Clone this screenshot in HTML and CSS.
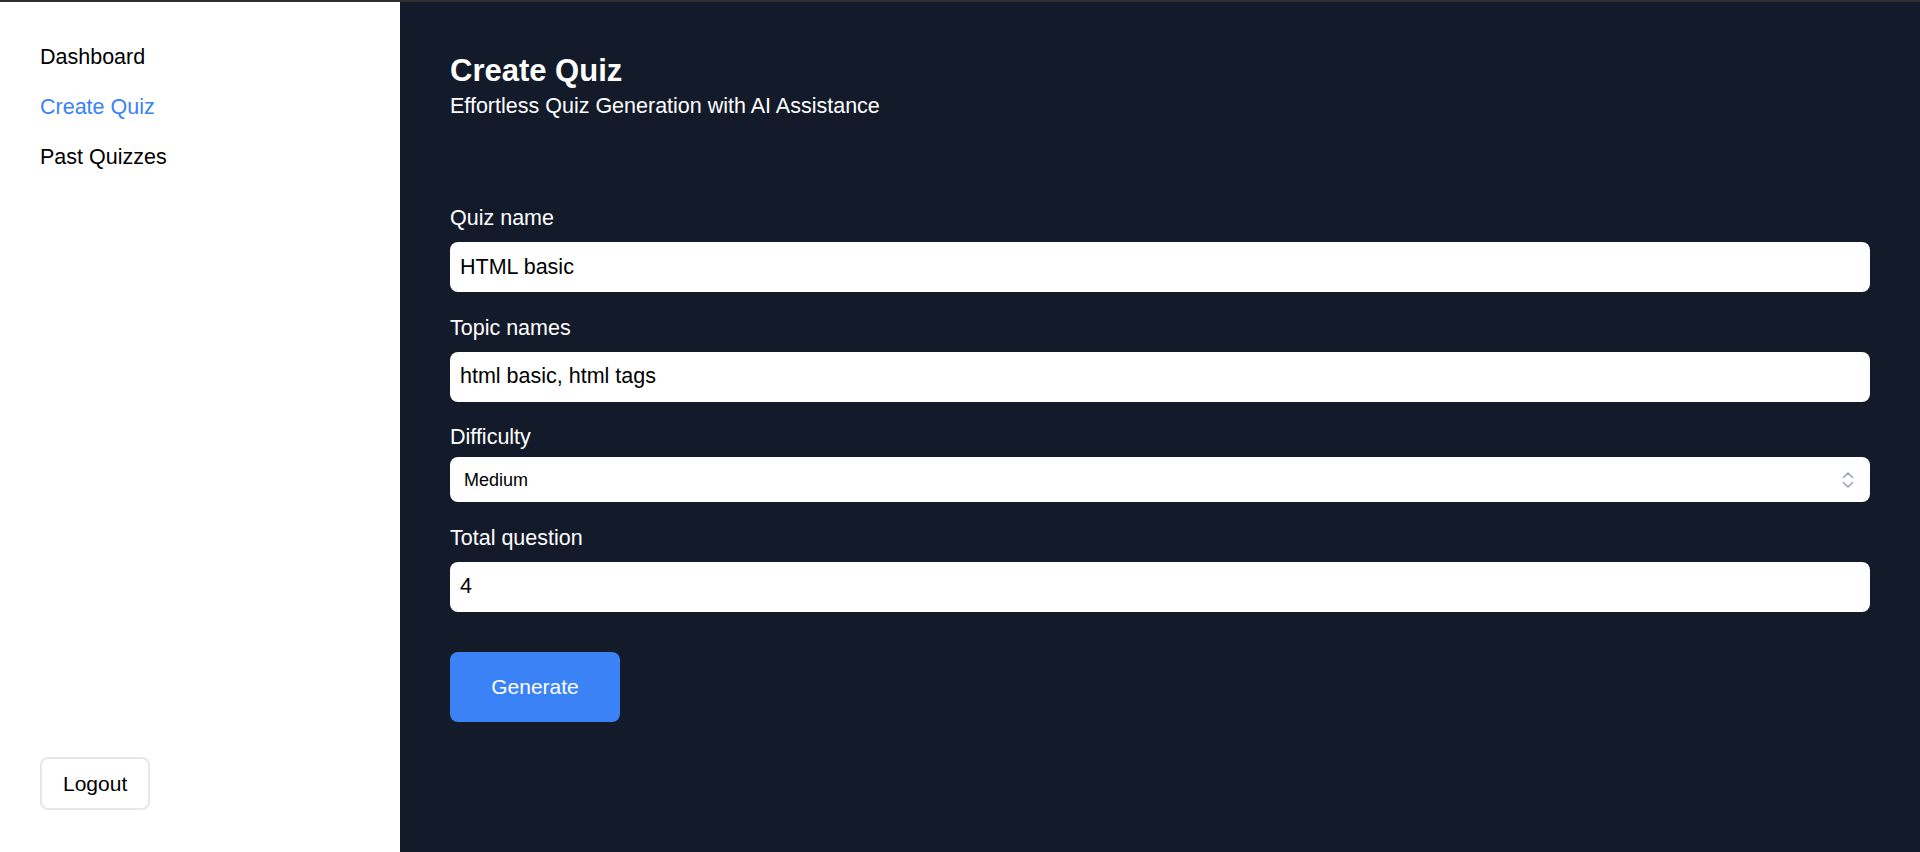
FILE: index.html
```html
<!DOCTYPE html>
<html lang="en">
<head>
<meta charset="utf-8">
<title>Create Quiz</title>
<link rel="stylesheet" href="styles.css">
</head>
<body>
<div class="topbar"></div>
<div class="app">
  <aside class="sidebar">
    <nav class="nav">
      <a class="nav-link" href="#">Dashboard</a>
      <a class="nav-link active" href="#">Create Quiz</a>
      <a class="nav-link" href="#">Past Quizzes</a>
    </nav>
    <button class="logout" type="button">Logout</button>
  </aside>
  <main class="main">
    <h1 class="title">Create Quiz</h1>
    <p class="subtitle">Effortless Quiz Generation with AI Assistance</p>
    <form class="form">
      <div class="field">
        <label class="label" for="qname">Quiz name</label>
        <input class="input" id="qname" type="text" value="HTML basic">
      </div>
      <div class="field">
        <label class="label" for="topics">Topic names</label>
        <input class="input" id="topics" type="text" value="html basic, html tags">
      </div>
      <div class="field">
        <label class="label label-tight" for="diff">Difficulty</label>
        <div class="select-wrap">
          <select class="select" id="diff">
            <option>Easy</option>
            <option selected>Medium</option>
            <option>Hard</option>
          </select>
          <svg class="select-icon" width="12" height="18" viewBox="0 0 12 18" aria-hidden="true">
            <path d="M1.5 6.5 L6 2 L10.5 6.5" fill="none" stroke="#9ca3af" stroke-width="1.6" stroke-linecap="round" stroke-linejoin="round"/>
            <path d="M1.5 11.5 L6 16 L10.5 11.5" fill="none" stroke="#9ca3af" stroke-width="1.6" stroke-linecap="round" stroke-linejoin="round"/>
          </svg>
        </div>
      </div>
      <div class="field">
        <label class="label" for="total">Total question</label>
        <input class="input" id="total" type="number" value="4">
      </div>
      <button class="generate" type="button">Generate</button>
    </form>
  </main>
</div>
</body>
</html>
```

FILE: styles.css
```css
* {
  box-sizing: border-box;
}

html, body {
  margin: 0;
  padding: 0;
}

body {
  font-family: "Liberation Sans", Arial, sans-serif;
  background: #131a2a;
  overflow: hidden;
}

.topbar {
  height: 2px;
  background: #303030;
}

.app {
  display: flex;
  height: 850px;
}

.sidebar {
  width: 400px;
  flex: 0 0 400px;
  background: #ffffff;
  display: flex;
  flex-direction: column;
  padding: 30px 0 42px 40px;
}

.nav {
  display: flex;
  flex-direction: column;
}

.nav-link {
  font-size: 21.5px;
  line-height: 24px;
  padding: 13px 0;
  color: #000000;
  text-decoration: none;
  align-self: flex-start;
}

.nav-link.active {
  color: #3b82f6;
}

.logout {
  margin-top: auto;
  align-self: flex-start;
  font-family: inherit;
  font-size: 21px;
  line-height: 24px;
  padding: 12.5px 21px;
  border: 2px solid #e5e7eb;
  border-radius: 8px;
  background: #ffffff;
  color: #000000;
}

.main {
  flex: 1;
  background: #131a2a;
  color: #ffffff;
  padding: 51px 50px 0;
}

.title {
  margin: 0;
  font-size: 31px;
  line-height: 36px;
  font-weight: 700;
}

.subtitle {
  margin: 5px 0 0;
  font-size: 21.5px;
  line-height: 24px;
}

.form {
  margin-top: 88px;
  display: flex;
  flex-direction: column;
}

.field {
  display: flex;
  flex-direction: column;
}

.field + .field {
  margin-top: 23.5px;
}

.label {
  font-size: 21.5px;
  line-height: 24px;
  margin-bottom: 12px;
}

.label-tight {
  margin-bottom: 8px;
}

.input {
  height: 50px;
  border: none;
  border-radius: 8px;
  padding: 0 10px;
  font-family: inherit;
  font-size: 21.5px;
  color: #000000;
  background: #ffffff;
  outline: none;
}

.input::-webkit-outer-spin-button,
.input::-webkit-inner-spin-button {
  -webkit-appearance: none;
  margin: 0;
}

.select-wrap {
  position: relative;
}

.select {
  width: 100%;
  height: 45px;
  border: none;
  border-radius: 8px;
  padding: 0 14px;
  font-family: inherit;
  font-size: 18px;
  color: #000000;
  background: #ffffff;
  -webkit-appearance: none;
  appearance: none;
  outline: none;
}

.select-icon {
  position: absolute;
  right: 16px;
  top: 14px;
  pointer-events: none;
}

.generate {
  margin-top: 40px;
  align-self: flex-start;
  width: 170px;
  height: 70px;
  border: none;
  border-radius: 8px;
  background: #3b82f6;
  color: #ffffff;
  font-family: inherit;
  font-size: 21px;
}
```
